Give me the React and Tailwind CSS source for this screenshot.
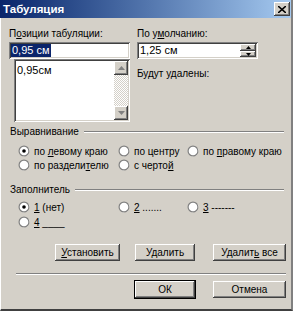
import React from "react";

const raised =
  "shadow-[inset_-1px_-1px_#404040,inset_1px_1px_#ffffff,inset_-2px_-2px_#808080,inset_2px_2px_#d4d0c8]";
const sunken =
  "shadow-[inset_1px_1px_#808080,inset_-1px_-1px_#ffffff,inset_2px_2px_#404040,inset_-2px_-2px_#d4d0c8]";

const Radio = ({ checked, children }) => (
  <div className="flex items-center h-[14px] gap-[4px] whitespace-nowrap">
    <svg width="12" height="12" viewBox="0 0 12 12" className="shrink-0">
      <circle cx="6" cy="6" r="5.5" fill="#808080" />
      <path d="M1.5 9.5 A5.5 5.5 0 0 0 10.5 2.5 L11.5 6 A5.5 5.5 0 0 1 1.5 9.5Z" fill="#fff" />
      <circle cx="6" cy="6" r="4.3" fill="#fff" />
      {checked && <circle cx="6" cy="6" r="1.8" fill="#000" />}
    </svg>
    <span>{children}</span>
  </div>
);

const Btn = ({ w, children, def }) => (
  <div
    className={`h-[17px] flex items-center justify-center bg-[#d4d0c8] ${raised} ${
      def ? "outline outline-1 outline-black" : ""
    }`}
    style={{ width: w }}
  >
    <span className="whitespace-pre">{children}</span>
  </div>
);

const Group = ({ title }) => (
  <div className="flex items-center h-[13px] pl-[9px] pr-[7px] gap-[5px]">
    <span>{title}</span>
    <div className="flex-1 border-t border-t-[#808080] border-b border-b-white" />
  </div>
);

export default function App() {
  return (
    <div
      className="w-[293px] h-[311px] bg-[#d4d0c8] flex flex-col text-[10px] leading-[13px] text-black border-l border-l-white border-b-2 border-b-[#404040] border-r-2 border-r-[#808080]"
      style={{ fontFamily: '"Liberation Sans", Arial, sans-serif' }}
    >
      {/* title bar */}
      <div className="h-[18px] bg-linear-to-r from-[#0a246a] to-[#a6caf0] flex items-center justify-between pl-[3px] pr-[1px] -ml-px">
        <span className="text-white font-bold text-[11.5px]">Табуляция</span>
        <div className={`w-[16px] h-[14px] bg-[#d4d0c8] ${raised} flex items-center justify-center`}>
          <svg width="8" height="7" viewBox="0 0 8 7">
            <path d="M0 0 L8 7 M8 0 L0 7" stroke="#000" strokeWidth="1.6" />
          </svg>
        </div>
      </div>

      {/* positions / default */}
      <div className="flex pl-[8px] mt-[9px] gap-[7px]">
        <div className="w-[121px] flex flex-col">
          <span>
            П<u>о</u>зиции табуляции:
          </span>
          <div className={`mt-[2px] h-[17px] bg-white ${sunken} flex items-center pl-[2px] text-[11px]`}>
            <span className="bg-[#0a246a] text-white px-px">0,95 см</span>
          </div>
          <div className={`ml-[5px] h-[63px] bg-white ${sunken} flex p-[2px]`}>
            <div className="flex-1 pl-[1px] pt-[3px] text-[11px]">0,95см</div>
            <div className="w-[14px] flex flex-col">
              <div className={`h-[14px] bg-[#d4d0c8] ${raised} flex items-center justify-center`}>
                <svg width="7" height="4" viewBox="0 0 7 4">
                  <path d="M3.5 0 L7 4 L0 4Z" fill="#808080" />
                </svg>
              </div>
              <div className="flex-1 bg-[repeating-conic-gradient(#d4d0c8_0_25%,#ffffff_0_50%)] bg-[length:2px_2px]" />
              <div className={`h-[14px] bg-[#d4d0c8] ${raised} flex items-center justify-center`}>
                <svg width="7" height="4" viewBox="0 0 7 4">
                  <path d="M0 0 L7 0 L3.5 4Z" fill="#808080" />
                </svg>
              </div>
            </div>
          </div>
        </div>
        <div className="w-[121px] flex flex-col">
          <span>
            По у<u>м</u>олчанию:
          </span>
          <div className={`mt-[2px] h-[17px] bg-white ${sunken} flex items-center pl-[3px] pr-[2px] text-[11px]`}>
            <span className="flex-1">1,25 см</span>
            <div className="w-[16px] h-[13px] flex flex-col">
              <div className={`h-[7px] bg-[#d4d0c8] ${raised} flex items-center justify-center`}>
                <svg width="5" height="3" viewBox="0 0 5 3">
                  <path d="M2.5 0 L5 3 L0 3Z" fill="#000" />
                </svg>
              </div>
              <div className={`h-[6px] bg-[#d4d0c8] ${raised} flex items-center justify-center`}>
                <svg width="5" height="3" viewBox="0 0 5 3">
                  <path d="M0 0 L5 0 L2.5 3Z" fill="#000" />
                </svg>
              </div>
            </div>
          </div>
          <span className="mt-[8px]">Будут удалены:</span>
        </div>
      </div>

      {/* alignment */}
      <div className="mt-[3px]">
        <Group title="Выравнивание" />
      </div>
      <div className="grid grid-cols-[100px_69px_1fr] pl-[17px] mt-[6px]">
        <Radio checked>
          по <u>л</u>евому краю
        </Radio>
        <Radio>по центру</Radio>
        <Radio>
          по <u>п</u>равому краю
        </Radio>
        <Radio>
          по раздели<u>т</u>елю
        </Radio>
        <Radio>
          с черто<u>й</u>
        </Radio>
      </div>

      {/* leader */}
      <div className="mt-[11px]">
        <Group title="Заполнитель" />
      </div>
      <div className="grid grid-cols-[100px_69px_1fr] pl-[17px] mt-[4px] gap-y-[1px]">
        <Radio checked>
          <u>1</u> (нет)
        </Radio>
        <Radio>
          <u>2</u> .......
        </Radio>
        <Radio>
          <u>3</u> -------
        </Radio>
        <Radio>
          <u>4</u> ____
        </Radio>
      </div>

      {/* set / clear buttons */}
      <div className="flex justify-end pr-[5px] mt-[15px]">
        <Btn w="65px">
          <u>У</u>становить
        </Btn>
        <div className="w-[15px]" />
        <Btn w="60px">
          У<u>д</u>алить
        </Btn>
        <div className="w-[18px]" />
        <Btn w="73px">
          Удалит<u>ь</u>{" "}все
        </Btn>
      </div>

      <div className="mt-[12px] ml-[15px] mr-[5px] border-t border-t-[#808080] border-b border-b-white" />

      <div className="flex justify-end pr-[5px] mt-[6px]">
        <Btn w="60px" def>
          ОК
        </Btn>
        <div className="w-[18px]" />
        <Btn w="73px">Отмена</Btn>
      </div>
    </div>
  );
}
